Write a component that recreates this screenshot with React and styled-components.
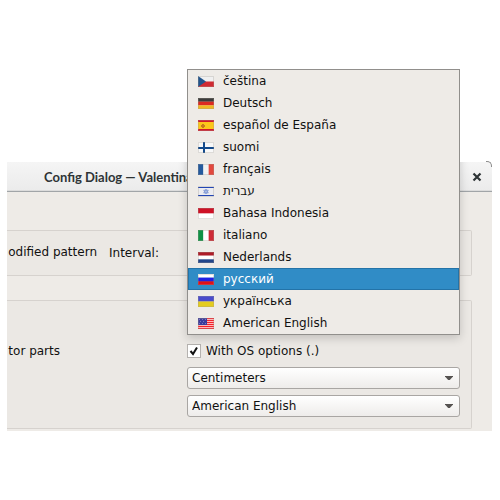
import React, { useId, useState } from "react";
import styled, { createGlobalStyle } from "styled-components";

const GlobalStyle = createGlobalStyle`
  * { box-sizing: border-box; }
  body {
    margin: 0;
    background: #ffffff;
    color: #111111;
    font: 12px/22px "DejaVu Sans", "Liberation Sans", sans-serif;
  }
`;

const Page = styled.main`
  padding: 162px 8px 0 7px;
`;

const Dialog = styled.section`
  position: relative;
  background: #eeebe7;
  padding-bottom: 2px;
  border-top-right-radius: 5px;
`;

const TitleBar = styled.header`
  position: relative;
  display: flex;
  align-items: center;
  justify-content: space-between;
  height: 30px;
  padding: 0 10px 0 37px;
  background: linear-gradient(#f5f5f5, #ebebeb);
  border-bottom: 1px solid #a1a5a8;
  box-shadow: inset 0 -1px #dcdcdc;
  border-top-right-radius: 5px;

  &::after {
    content: "";
    position: absolute;
    top: -1px;
    right: 0;
    width: 5px;
    height: 5px;
    border: solid #8c8c8c;
    border-width: 1px 1px 0 0;
    border-top-right-radius: 5px;
  }
`;

const Title = styled.h1`
  margin: 0;
  font: bold 13px/28px Lato, "Open Sans", sans-serif;
  color: #2e3436;
  white-space: nowrap;
`;

const CloseButton = styled.button`
  display: flex;
  padding: 0;
  border: 0;
  background: none;
  color: #2e3436;
`;

const Content = styled.div`
  display: flex;
  flex-direction: column;
  gap: 24px;
  padding: 38px 20px 0 0;
`;

const Group = styled.div`
  background: #ebe8e4;
  border: solid #d6d2ce;
  border-width: 1px 1px 1px 0;
  border-radius: 0 2px 2px 0;
`;

const AutosaveGroup = styled(Group)`
  display: flex;
  align-items: center;
  gap: 12px;
  height: 46px;
`;

const LanguageGroup = styled(Group)`
  display: grid;
  grid-template-columns: 180px 1fr;
  padding: 10px 11px 11px 0;
`;

const ClippedText = styled.span`
  display: flex;
  justify-content: flex-end;
  align-self: start;
  width: ${(p) => p.$width}px;
  margin-top: ${(p) => p.$top}px;
  overflow: hidden;
  white-space: nowrap;
`;

const Fields = styled.div`
  display: flex;
  flex-direction: column;
  gap: 6px;
`;

const LanguageField = styled.div`
  position: relative;
  height: 22px;
`;

/* The shadow is cut away above the dialog's top edge, 93px into the list. */
const Popup = styled.ul`
  position: absolute;
  left: 0;
  right: 0;
  bottom: -2px;
  z-index: 1;
  margin: 0;
  padding: 0;
  list-style: none;
  background: #eeebe7;
  border: 1px solid #918f8c;
  box-shadow: 0 3px 9px rgba(0, 0, 0, 0.18);
  clip-path: polygon(
    0 0,
    100% 0,
    100% 93px,
    calc(100% + 12px) 93px,
    calc(100% + 12px) calc(100% + 16px),
    -12px calc(100% + 16px),
    -12px 93px,
    0 93px
  );
`;

const Option = styled.li`
  display: flex;
  align-items: center;
  gap: 9px;
  height: 22px;
  padding: 0 10px;
  direction: ltr;
  cursor: default;
  white-space: nowrap;
  color: ${(p) => (p.$selected ? "#ffffff" : "#111111")};
  background: ${(p) => (p.$selected ? "#308cc6" : "transparent")};
  box-shadow: ${(p) => (p.$selected ? "inset 0 0 0 1px #2373a8" : "none")};
`;

const FlagSvg = styled.svg`
  flex: none;
  display: block;
`;

const CheckRow = styled.label`
  display: flex;
  align-items: center;
  gap: 5px;
  height: 22px;
  margin: 1px 0 -1px;
`;

const CheckWrap = styled.span`
  position: relative;
  display: flex;

  svg {
    position: absolute;
    inset: 0;
    pointer-events: none;
  }
`;

const CheckBox = styled.input`
  appearance: none;
  width: 14px;
  height: 14px;
  margin: 0;
  background: #ffffff;
  border: 1px solid #b5b2af;

  &:not(:checked) + svg { display: none; }
`;

const SelectWrap = styled.div`
  position: relative;
  display: flex;

  svg {
    position: absolute;
    right: 7px;
    top: 9px;
    pointer-events: none;
  }
`;

const Select = styled.select`
  appearance: none;
  width: 100%;
  height: 22px;
  padding: 0 20px 0 4px;
  font: inherit;
  line-height: 20px;
  color: #111111;
  background: linear-gradient(#ffffff, #eeecea);
  border: 1px solid #a9a6a3;
  border-radius: 3px;
`;

const HStripes = ({ colors }) =>
  colors.map((c, i) => (
    <rect key={i} y={(11 / colors.length) * i} width="16" height={11 / colors.length + 0.1} fill={c} />
  ));

const VStripes = ({ colors }) =>
  colors.map((c, i) => (
    <rect key={i} x={(16 / colors.length) * i} width={16 / colors.length + 0.1} height="11" fill={c} />
  ));

const flags = {
  cs: (
    <>
      <HStripes colors={["#f0f0f0", "#cf2a32"]} />
      <path d="M0 0L8 5.5L0 11Z" fill="#21548c" />
    </>
  ),
  de: <HStripes colors={["#3c3c3c", "#dc2a22", "#f0b824"]} />,
  es: (
    <>
      <rect width="16" height="11" fill="#d2182a" />
      <rect y="2" width="16" height="7" fill="#fcc61a" />
      <path d="M4 4h2v1h1v2h-1v1h-2v-1h-1v-2h1z" fill="#c87a1c" />
    </>
  ),
  fi: (
    <>
      <rect width="16" height="11" fill="#f8f8f8" />
      <path d="M0 5h16v2H0zM5 0h2v11H5z" fill="#134a8c" />
    </>
  ),
  fr: <VStripes colors={["#245a9e", "#f2f2f2", "#e2483e"]} />,
  he: (
    <>
      <rect width="16" height="11" fill="#ececf0" />
      <path d="M0 1h16v1H0zM0 9h16v1H0z" fill="#2346b4" />
      <path d="M8 3L10.4 7H5.6ZM8 8L5.6 4.2H10.4Z" fill="#a9bbe4" stroke="#7892d2" strokeWidth=".6" />
    </>
  ),
  id: <HStripes colors={["#ce1126", "#ffffff"]} />,
  it: <VStripes colors={["#109246", "#ffffff", "#ce2b37"]} />,
  nl: <HStripes colors={["#ae1c28", "#ffffff", "#21468b"]} />,
  ru: <HStripes colors={["#ffffff", "#2020e4", "#e01018"]} />,
  uk: <HStripes colors={["#4a4ccc", "#e4cc20"]} />,
  us: (
    <>
      <rect width="16" height="11" fill="#ffb8b8" />
      <path d="M0 0h16v1H0zM0 2h16v1H0zM0 4h16v1H0zM0 6h16v1H0zM0 8h16v1H0zM0 10h16v1H0z" fill="#f5222c" />
      <rect width="9" height="7" fill="#3c3c9c" />
      <path d="M1 1h1v1H1zM4 1h1v1H4zM7 1h1v1H7zM2 3h1v1H2zM5 3h1v1H5zM1 5h1v1H1zM4 5h1v1H4zM7 5h1v1H7z" fill="#7878c0" />
    </>
  ),
};

const Flag = ({ code }) => (
  <FlagSvg width="16" height="11" viewBox="0 0 16 11" aria-hidden="true">
    {flags[code]}
    <rect x=".5" y=".5" width="15" height="10" fill="none" stroke="#a09890" strokeOpacity=".3" />
  </FlagSvg>
);

const languages = [
  ["cs", "čeština"],
  ["de", "Deutsch"],
  ["es", "español de España"],
  ["fi", "suomi"],
  ["fr", "français"],
  ["he", "עברית"],
  ["id", "Bahasa Indonesia"],
  ["it", "italiano"],
  ["nl", "Nederlands"],
  ["ru", "русский"],
  ["uk", "українська"],
  ["us", "American English"],
];

function ComboBox({ label, options }) {
  return (
    <SelectWrap>
      <Select aria-label={label}>
        {options.map((o) => (
          <option key={o}>{o}</option>
        ))}
      </Select>
      <svg width="8" height="4" viewBox="0 0 8 4" aria-hidden="true">
        <path d="M0 0H8V.6L4.8 4H3.2L0 .6Z" fill="#555250" />
      </svg>
    </SelectWrap>
  );
}

export default function App() {
  const [selected, setSelected] = useState("ru");
  const osOptionsId = useId();

  return (
    <Page>
      <GlobalStyle />
      <Dialog>
        <TitleBar>
          <Title>Config Dialog — Valentina</Title>
          <CloseButton type="button" aria-label="Close">
            <svg width="10" height="10" viewBox="0 0 10 10" aria-hidden="true">
              <path d="M1.5 1.5L8.5 8.5M8.5 1.5L1.5 8.5" stroke="currentColor" strokeWidth="2.2" />
            </svg>
          </CloseButton>
        </TitleBar>
        <Content>
          <AutosaveGroup>
            <ClippedText $width={90} $top={10}>odified pattern</ClippedText>
            <span>Interval:</span>
          </AutosaveGroup>
          <LanguageGroup>
            <ClippedText $width={53} $top={29}>tor parts</ClippedText>
            <Fields>
              <LanguageField>
                <Popup role="listbox" aria-label="Language">
                  {languages.map(([code, name]) => (
                    <Option
                      key={code}
                      role="option"
                      aria-selected={code === selected}
                      $selected={code === selected}
                      onClick={() => setSelected(code)}
                    >
                      <Flag code={code} />
                      {name}
                    </Option>
                  ))}
                </Popup>
              </LanguageField>
              <CheckRow htmlFor={osOptionsId}>
                <CheckWrap>
                  <CheckBox id={osOptionsId} type="checkbox" defaultChecked />
                  <svg width="14" height="14" viewBox="0 0 14 14" aria-hidden="true">
                    <path d="M3.5 7L6 10L10 3.5" fill="none" stroke="#111111" strokeWidth="2" />
                  </svg>
                </CheckWrap>
                With OS options (.)
              </CheckRow>
              <ComboBox label="Default unit" options={["Centimeters"]} />
              <ComboBox label="Label language" options={["American English"]} />
            </Fields>
          </LanguageGroup>
        </Content>
      </Dialog>
    </Page>
  );
}
